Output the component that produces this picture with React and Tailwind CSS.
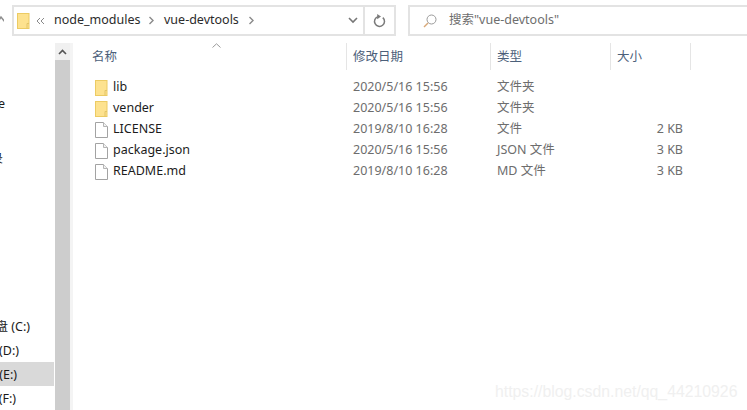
import React from 'react';

const font = { fontFamily: '"Noto Sans", "Noto Sans CJK SC", sans-serif' };

function FolderIcon() {
  return (
    <svg width="13" height="16" viewBox="0 0 13 16" className="shrink-0">
      <rect x="0.5" y="0.5" width="11.5" height="15" fill="#fde28f" stroke="#eccb63" />
      <path d="M12 10.5H10V15.5" fill="none" stroke="#e2c468" />
    </svg>
  );
}

function FileIcon() {
  return (
    <svg width="13" height="16" viewBox="0 0 13 16" className="shrink-0">
      <path d="M0.5 0.5H8.5L12.5 4.5V15.5H0.5Z" fill="#fff" stroke="#a3a3a3" />
      <path d="M8.5 0.5V4.5H12.5" fill="#f2f2f2" stroke="#b5b5b5" />
    </svg>
  );
}

const files = [
  { name: 'lib', folder: true, date: '2020/5/16 15:56', type: '文件夹', size: '' },
  { name: 'vender', folder: true, date: '2020/5/16 15:56', type: '文件夹', size: '' },
  { name: 'LICENSE', date: '2019/8/10 16:28', type: '文件', size: '2 KB' },
  { name: 'package.json', date: '2020/5/16 15:56', type: 'JSON 文件', size: '3 KB' },
  { name: 'README.md', date: '2019/8/10 16:28', type: 'MD 文件', size: '3 KB' },
];

function Chevron() {
  return (
    <svg width="7" height="9" viewBox="0 0 7 9" className="shrink-0">
      <path d="M1.5 1L5 4.5L1.5 8" fill="none" stroke="#8a8a8a" strokeWidth="1.4" />
    </svg>
  );
}

function Toolbar() {
  return (
    <div className="flex h-[43px] shrink-0 pt-[5px]">
      <div className="w-[12px] shrink-0 overflow-hidden pt-[10px]">
        <svg width="6" height="10" viewBox="0 0 6 10" className="-ml-[2px]">
          <path d="M0 7L3 2L7 7" fill="none" stroke="#8f8f8f" strokeWidth="1.5" />
        </svg>
      </div>
      <div className="flex h-[31px] w-[384px] shrink-0 items-center border-2 border-[#e3e3e3] text-[12.5px] text-[#2b2b2b]">
        <div className="ml-[3px]"><svg width="13" height="16" viewBox="0 0 13 16" className="block">
          <rect x="0.5" y="0.5" width="11.5" height="15" fill="#fde28f" stroke="#eccb63" />
          <path d="M12 10.5H10V15.5" fill="none" stroke="#e2c468" />
        </svg></div>
        <svg width="9" height="8" viewBox="0 0 9 8" className="ml-[6px]">
          <path d="M4 1L1 4L4 7M8 1L5 4L8 7" fill="none" stroke="#8a8a8a" />
        </svg>
        <span className="ml-[9px] w-[94px]">node_modules</span>
        <Chevron />
        <span className="ml-[9px] w-[84px]">vue-devtools</span>
        <Chevron />
        <svg width="10" height="7" viewBox="0 0 10 7" className="ml-auto mr-[5px]">
          <path d="M1 1L5 5L9 1" fill="none" stroke="#777" strokeWidth="1.6" />
        </svg>
        <div className="flex h-full w-[31px] items-center justify-center border-l-2 border-[#e3e3e3]">
          <svg width="13" height="14" viewBox="0 0 13 14">
            <path d="M9.8 3.6A5 5 0 1 1 5 2.6" fill="none" stroke="#7a7a7a" strokeWidth="1.5" />
            <path d="M4.2 0L8 2.6L4.2 5.2Z" fill="#7a7a7a" />
          </svg>
        </div>
      </div>
      <div className="ml-[12px] flex h-[31px] flex-1 items-center border-2 border-r-0 border-[#e3e3e3] pl-[13px] text-[12.5px] text-[#6e6e6e]">
        <svg width="14" height="14" viewBox="0 0 14 14">
          <circle cx="8.5" cy="5.5" r="4.5" fill="none" stroke="#9a9a9a" />
          <path d="M5 9L1 13" stroke="#d8a878" strokeWidth="1.4" />
        </svg>
        <span className="ml-[12px]">搜索"vue-devtools"</span>
      </div>
    </div>
  );
}

function Sidebar() {
  return (
    <div className="flex w-[55px] shrink-0 flex-col overflow-hidden text-[12.5px] text-[#1a1a1a]">
      <div className="mt-[49px] flex h-[24px] items-center justify-end whitespace-nowrap pr-[50px]">Google</div>
      <div className="mt-[31px] flex h-[24px] items-center justify-end whitespace-nowrap pr-[52px] pt-[2px]">目录</div>
      <div className="mt-[144px] flex h-[24px] items-center justify-end whitespace-nowrap pr-[25px] pt-[2px]">本地磁盘 (C:)</div>
      <div className="flex h-[24px] items-center justify-end whitespace-nowrap pr-[36px] pt-[2px]">软件 (D:)</div>
      <div className="mr-[1px] flex h-[24px] items-center justify-end whitespace-nowrap bg-[#d9d9d9] pr-[37px] pt-[2px]">文档 (E:)</div>
      <div className="flex h-[24px] items-center justify-end whitespace-nowrap pr-[39px] pt-[2px]">其他 (F:)</div>
    </div>
  );
}

function Scrollbar() {
  return (
    <div className="flex w-[18px] shrink-0 border-r-[3px] border-[#f4f4f4]">
      <div className="flex w-[15px] flex-col bg-[#cdcdcd]">
        <div className="flex h-[17px] items-center justify-center bg-[#f0f0f0]">
          <svg width="9" height="6" viewBox="0 0 9 6">
            <path d="M1 5L4.5 1.5L8 5" fill="none" stroke="#555" strokeWidth="1.6" />
          </svg>
        </div>
      </div>
    </div>
  );
}

function FileList() {
  const row = 'grid grid-cols-[255px_144px_120px_80px] pl-[19px]';
  return (
    <div className="flex-1">
      <div className={`${row} relative h-[27px] text-[12.5px] text-[#4c607a]`}>
        <svg width="9" height="5" viewBox="0 0 9 5" className="absolute left-[139px] top-0">
          <path d="M0.5 4.5L4.5 0.8L8.5 4.5" fill="none" stroke="#9a9a9a" />
        </svg>
        <div className="border-r border-[#e5e5e5] pt-[5px]">名称</div>
        <div className="border-r border-[#e5e5e5] pl-[6px] pt-[5px]">修改日期</div>
        <div className="border-r border-[#e5e5e5] pl-[6px] pt-[5px]">类型</div>
        <div className="border-r border-[#e5e5e5] pl-[6px] pt-[5px]">大小</div>
      </div>
      <div className="pt-[7px] text-[12.5px]">
        {files.map((f) => (
          <div key={f.name} className={`${row} h-[21px] items-center text-[#6d6d6d]`}>
            <div className="flex items-center gap-[5px] pl-[3px] text-[#1c1c1c]">
              {f.folder ? <FolderIcon /> : <FileIcon />}
              <span>{f.name}</span>
            </div>
            <div className="pl-[6px]">{f.date}</div>
            <div className="pl-[6px]">{f.type}</div>
            <div className="pr-[8px] text-right">{f.size}</div>
          </div>
        ))}
      </div>
    </div>
  );
}

export default function App() {
  return (
    <div className="relative flex h-[410px] w-[747px] flex-col overflow-hidden bg-white" style={font}>
      <Toolbar />
      <div className="flex min-h-0 flex-1">
        <Sidebar />
        <Scrollbar />
        <FileList />
      </div>
      <div className="absolute left-[495px] top-[380px] text-[15.8px] text-[#f0f0f0]" style={{ fontFamily: '"Liberation Sans", sans-serif' }}>
        https://blog.csdn.net/qq_44210926
      </div>
    </div>
  );
}
